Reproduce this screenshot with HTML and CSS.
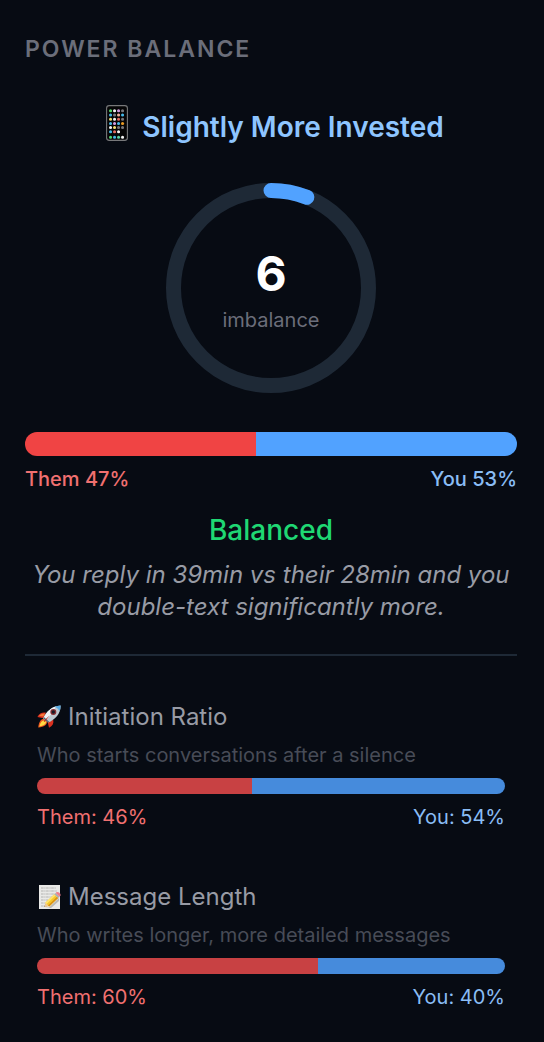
FILE: index.html
```html
<!DOCTYPE html>
<html lang="en">
<head>
<meta charset="utf-8">
<meta name="viewport" content="width=device-width, initial-scale=1">
<title>Power Balance</title>
<link rel="stylesheet" href="styles.css">
</head>
<body>
<main class="card">
  <h1 class="card-title">Power Balance</h1>

  <div class="verdict">
    <svg class="phone" viewBox="0 0 22 36" aria-hidden="true">
      <rect x="0.6" y="0.6" width="20.8" height="34.8" rx="2.6" fill="#050506" stroke="#77787a" stroke-width="1.1"/>
      <g fill="none" stroke-width="3" stroke-linecap="round">
        <path stroke="#54d66a" d="M4.5 5.8h.1M4.5 32.2h.1"/>
        <path stroke="#f4f4f4" d="M8.5 5.8h.1M8.5 14.2h.1M4.5 22.6h.1M12.5 26.8h.1M16.5 32.2h.1"/>
        <path stroke="#d59be0" d="M12.5 5.8h.1M8.5 18.4h.1"/>
        <path stroke="#77777c" d="M16.5 5.8h.1M8.5 10h.1M16.5 14.2h.1M12.5 22.6h.1M16.5 22.6h.1"/>
        <path stroke="#45b8e8" d="M4.5 10h.1M16.5 10h.1M4.5 18.4h.1M12.5 18.4h.1M4.5 26.8h.1M8.5 32.2h.1"/>
        <path stroke="#f2b19c" d="M12.5 10h.1"/>
        <path stroke="#f3dc72" d="M4.5 14.2h.1M8.5 22.6h.1"/>
        <path stroke="#e56a60" d="M12.5 14.2h.1M8.5 26.8h.1"/>
        <path stroke="#e89a24" d="M16.5 18.4h.1"/>
        <path stroke="#5ad0a0" d="M12.5 32.2h.1"/>
      </g>
    </svg>
    <h2 class="verdict-text">Slightly More Invested</h2>
  </div>

  <div class="gauge">
    <svg class="gauge-ring" viewBox="0 0 210 210" aria-hidden="true">
      <circle class="ring-track" cx="105" cy="105" r="97.5"/>
      <circle class="ring-value" cx="105" cy="105" r="97.5" pathLength="100" stroke-dasharray="6 94" transform="rotate(-90 105 105)"/>
    </svg>
    <div class="gauge-label">
      <span class="gauge-number">6</span>
      <span class="gauge-unit">imbalance</span>
    </div>
  </div>

  <div class="bar bar-large">
    <div class="bar-them" style="width:47%"></div>
    <div class="bar-you"></div>
  </div>
  <div class="legend legend-main">
    <span class="them">Them 47%</span>
    <span class="you">You 53%</span>
  </div>

  <p class="status">Balanced</p>
  <p class="summary">You reply in 39min vs their 28min and you double-text significantly more.</p>

  <div class="metrics">
    <section class="metric">
      <h3 class="metric-title">
        <svg class="emoji" viewBox="0 0 24 24" aria-hidden="true">
          <path fill="#d9301f" d="M9 7.8C5.500 7 2.200 8.400.400 12l6 1.200zM16.200 14.800c.8 3.500-.6 6.300-4.200 8l-1.300-5.500z"/>
          <path fill="#f27a3a" d="M8 8.500C5.300 8.300 3.200 9.200 1.800 11l4.500.6z"/>
          <path fill="#ef5a20" d="M7.500 14.200c-3-.6-5.500 1.800-6.300 8.300 6-.3 9-2.600 8.800-5.900z"/>
          <path fill="#ffdc42" d="M7.600 15.300c-2.400.2-4.300 2-5.300 6.100 4.400-.7 6.700-2.400 6.800-4.400z"/>
          <path fill="#bfc9d1" d="M6.200 13.500C9 7 14.500 1.200 23.600.4c.2 8.400-5.400 14-12.600 17.200z"/>
          <path fill="#eef3f6" d="M6.200 13.500C9 7 14 2.600 19 1.300c-1.700 4.200-5.900 9.700-10.400 14.200z"/>
          <path fill="#58a9e0" d="M17.500 1.800c2-.9 4-1.300 6.100-1.400 0 2.200-.3 4-1 5.700-1.100-2-2.900-3.500-5.100-4.300z"/>
          <path fill="#596873" d="m6.200 13.500 4.800 4.100 1.400-.7-5.500-4.800z"/>
          <circle cx="16.300" cy="7" r="3" fill="#872e32"/>
          <circle cx="16.300" cy="7" r="1.700" fill="#171c28"/>
          <path fill="#bd2b24" d="M12.800 10.200 7.600 17l-1-.9z"/>
        </svg>
        Initiation Ratio
      </h3>
      <p class="metric-note">Who starts conversations after a silence</p>
      <div class="bar bar-small">
        <div class="bar-them" style="width:46%"></div>
        <div class="bar-you"></div>
      </div>
      <div class="legend">
        <span class="them">Them: 46%</span>
        <span class="you">You: 54%</span>
      </div>
    </section>

    <section class="metric">
      <h3 class="metric-title">
        <svg class="emoji" viewBox="0 0 24 24" aria-hidden="true">
          <path fill="#e9e9e7" d="M2 0h21v24H2z"/>
          <path fill="none" stroke="#a4a4a4" stroke-width=".8" stroke-dasharray="2.600 .7 1.200 .6" d="M4 3h15M4 6h16M4 9h14M4 12h11M4 15h7M4 18h4M4 21h4"/>
          <path fill="#b9b9b7" d="m8 22.800 4-.3L22 13v3l-8 7z"/>
          <path fill="#4a3c28" d="m7.400 22 1-3.200 2.200 2.200z"/>
          <path fill="#efc995" d="m8.400 17.500 3.800 3.800-3.800.7-.8-.5z"/>
          <path fill="#f6c72b" d="m8.300 17.800 9-8.600 3.900 3.800-9 8.600z"/>
          <path fill="#ffe36a" d="m8.300 17.800 9-8.600 1.300 1.200-9 8.700z"/>
          <path fill="#d99116" d="m11 20.500 9-8.700 1.200 1.200-9 8.600z"/>
          <path fill="#a9b0b4" d="m17.300 9.200 1.400-1.300 3.900 3.800-1.400 1.300z"/>
          <path fill="#ee7c8b" d="m18.700 7.900.7-.6c1.800-1.300 5.300 1.600 3.800 3.800l-.6.6z"/>
        </svg>
        Message Length
      </h3>
      <p class="metric-note">Who writes longer, more detailed messages</p>
      <div class="bar bar-small">
        <div class="bar-them" style="width:60%"></div>
        <div class="bar-you"></div>
      </div>
      <div class="legend">
        <span class="them">Them: 60%</span>
        <span class="you">You: 40%</span>
      </div>
    </section>
  </div>
</main>
</body>
</html>
```

FILE: styles.css
```css
* {
  box-sizing: border-box;
}

body {
  margin: 0;
  background: #070b13;
  color: #989ba5;
  font-family: Inter, "Liberation Sans", sans-serif;
}

h1, h2, h3, p {
  margin: 0;
}

.card {
  display: flex;
  flex-direction: column;
  padding: 33px 27px 29px 25px;
}

.card-title {
  color: #6b6e7a;
  font-size: 23px;
  font-weight: 600;
  line-height: 32px;
  letter-spacing: 2px;
  text-transform: uppercase;
}

.verdict {
  display: flex;
  justify-content: center;
  gap: 14px;
  margin-top: 40px;
  padding-left: 8px;
}

.phone {
  width: 22px;
  height: 36px;
}

.verdict-text {
  color: #8ec5ff;
  font-size: 28px;
  font-weight: 600;
  line-height: 44px;
}

.gauge {
  display: grid;
  place-items: center;
  margin-top: 34px;
}

.gauge-ring,
.gauge-label {
  grid-area: 1 / 1;
}

.gauge-ring {
  width: 210px;
  height: 210px;
}

.ring-track,
.ring-value {
  fill: none;
  stroke: #1e2936;
  stroke-width: 15;
}

.ring-value {
  stroke: #51a2ff;
  stroke-linecap: round;
}

.gauge-label {
  display: flex;
  flex-direction: column;
  align-items: center;
  padding-top: 4px;
}

.gauge-number {
  color: #fff;
  font-size: 48px;
  font-weight: 700;
  line-height: 60px;
}

.gauge-unit {
  color: #6b6e7a;
  font-size: 20px;
  line-height: 32px;
}

.bar {
  display: flex;
  overflow: hidden;
  border-radius: 12px;
}

.bar-large {
  height: 24px;
  margin-top: 39px;
}

.bar-small {
  height: 16px;
  margin-top: 9px;
}

.bar-them {
  background: #f04444;
}

.bar-you {
  flex: 1;
  background: #51a2ff;
}

.bar-small .bar-them {
  background: #c84143;
}

.bar-small .bar-you {
  background: #468bdc;
}

.legend {
  display: flex;
  justify-content: space-between;
  margin-top: 7px;
  font-size: 20px;
  line-height: 32px;
}

.legend-main {
  font-weight: 500;
}

.them {
  color: #f07070;
}

.you {
  color: #8abdf5;
}

.status {
  margin-top: 15px;
  color: #1fd873;
  font-size: 28px;
  font-weight: 500;
  line-height: 40px;
  text-align: center;
}

.summary {
  margin-top: 9px;
  font-size: 24px;
  font-style: italic;
  line-height: 32px;
  text-align: center;
}

.metrics {
  display: flex;
  flex-direction: column;
  gap: 48px;
  margin-top: 31px;
  padding: 45px 12px 0;
  border-top: 2px solid #1e2936;
}

.metric-title {
  display: flex;
  align-items: center;
  gap: 7px;
  font-size: 24px;
  font-weight: 400;
  line-height: 32px;
}

.emoji {
  width: 24px;
  height: 24px;
}

.metric-note {
  margin-top: 8px;
  color: #484c57;
  font-size: 20px;
  line-height: 28px;
}
```
